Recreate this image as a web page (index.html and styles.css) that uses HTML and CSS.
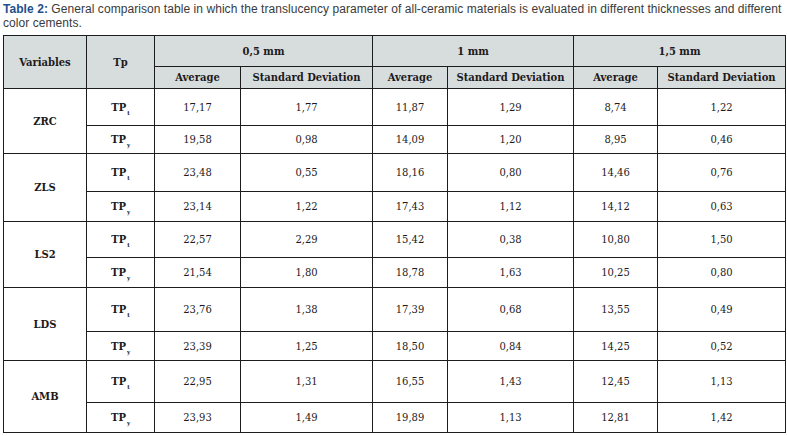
FILE: index.html
```html
<!DOCTYPE html>
<html lang="en">
<head>
<meta charset="utf-8">
<title>Table 2</title>
<link rel="stylesheet" href="styles.css">
</head>
<body>
<div class="page">
  <p class="caption"><strong class="label">Table 2:</strong> General comparison table in which the translucency parameter of all-ceramic materials is evaluated in different thicknesses and different color cements.</p>
  <table class="data">
    <colgroup>
      <col class="c-var"><col class="c-tp">
      <col class="c-avg1"><col class="c-sd1">
      <col class="c-avg2"><col class="c-sd2">
      <col class="c-avg3"><col class="c-sd3">
    </colgroup>
    <thead>
      <tr class="h1">
        <th rowspan="2">Variables</th>
        <th rowspan="2">Tp</th>
        <th colspan="2">0,5 mm</th>
        <th colspan="2">1 mm</th>
        <th colspan="2">1,5 mm</th>
      </tr>
      <tr class="h2">
        <th>Average</th><th>Standard Deviation</th>
        <th>Average</th><th>Standard Deviation</th>
        <th>Average</th><th>Standard Deviation</th>
      </tr>
    </thead>
    <tbody>
      <tr class="r-a1">
        <td rowspan="2" class="var">ZRC</td>
        <td class="tp">TP<sub>t</sub></td>
        <td>17,17</td><td>1,77</td><td>11,87</td><td>1,29</td><td>8,74</td><td>1,22</td>
      </tr>
      <tr class="r-a2">
        <td class="tp">TP<sub>y</sub></td>
        <td>19,58</td><td>0,98</td><td>14,09</td><td>1,20</td><td>8,95</td><td>0,46</td>
      </tr>
      <tr class="r-b1">
        <td rowspan="2" class="var">ZLS</td>
        <td class="tp">TP<sub>t</sub></td>
        <td>23,48</td><td>0,55</td><td>18,16</td><td>0,80</td><td>14,46</td><td>0,76</td>
      </tr>
      <tr class="r-b2">
        <td class="tp">TP<sub>y</sub></td>
        <td>23,14</td><td>1,22</td><td>17,43</td><td>1,12</td><td>14,12</td><td>0,63</td>
      </tr>
      <tr class="r-c1">
        <td rowspan="2" class="var">LS2</td>
        <td class="tp">TP<sub>t</sub></td>
        <td>22,57</td><td>2,29</td><td>15,42</td><td>0,38</td><td>10,80</td><td>1,50</td>
      </tr>
      <tr class="r-c2">
        <td class="tp">TP<sub>y</sub></td>
        <td>21,54</td><td>1,80</td><td>18,78</td><td>1,63</td><td>10,25</td><td>0,80</td>
      </tr>
      <tr class="r-d1">
        <td rowspan="2" class="var">LDS</td>
        <td class="tp">TP<sub>t</sub></td>
        <td>23,76</td><td>1,38</td><td>17,39</td><td>0,68</td><td>13,55</td><td>0,49</td>
      </tr>
      <tr class="r-d2">
        <td class="tp">TP<sub>y</sub></td>
        <td>23,39</td><td>1,25</td><td>18,50</td><td>0,84</td><td>14,25</td><td>0,52</td>
      </tr>
      <tr class="r-e1">
        <td rowspan="2" class="var">AMB</td>
        <td class="tp">TP<sub>t</sub></td>
        <td>22,95</td><td>1,31</td><td>16,55</td><td>1,43</td><td>12,45</td><td>1,13</td>
      </tr>
      <tr class="r-e2">
        <td class="tp">TP<sub>y</sub></td>
        <td>23,93</td><td>1,49</td><td>19,89</td><td>1,13</td><td>12,81</td><td>1,42</td>
      </tr>
    </tbody>
  </table>
</div>
</body>
</html>
```

FILE: styles.css
```css
html, body {
  margin: 0;
  padding: 0;
  background: #ffffff;
}

.page {
  padding: 0 3px;
}

.caption {
  margin: 0 -3px 0 0;
  padding-top: 2px;
  font-family: "Liberation Sans", Arial, sans-serif;
  font-size: 12px;
  letter-spacing: 0.06px;
  line-height: 14px;
  color: #3a3a3a;
  height: 33px;
}

.caption .label {
  color: #1f4f8c;
  font-weight: bold;
}

.data {
  border-collapse: collapse;
  table-layout: fixed;
  width: 782px;
  font-family: "DejaVu Serif Condensed", "DejaVu Serif", serif;
  font-stretch: condensed;
  font-size: 11.1px;
  color: #1e1a1b;
}

.c-var { width: 83px; }
.c-tp { width: 68px; }
.c-avg1 { width: 86px; }
.c-sd1 { width: 132px; }
.c-avg2 { width: 75px; }
.c-sd2 { width: 126px; }
.c-avg3 { width: 84px; }
.c-sd3 { width: 128px; }

.data th,
.data td {
  border: 1px solid #1c1c1c;
  padding: 0;
  text-align: center;
  vertical-align: middle;
}

.data th {
  background: #d7dddd;
  font-weight: bold;
}

.h1 { height: 31px; }
.h2 { height: 22px; }

.r-a1 { height: 37px; }
.r-a2 { height: 28px; }
.r-b1 { height: 38px; }
.r-b2 { height: 30px; }
.r-c1 { height: 36px; }
.r-c2 { height: 30px; }
.r-d1 { height: 44px; }
.r-d2 { height: 29px; }
.r-e1 { height: 42px; }
.r-e2 { height: 30px; }

.data td.var,
.data td.tp {
  font-weight: bold;
}

.tp sub {
  font-size: 6px;
  vertical-align: -4px;
  line-height: 0;
  margin-left: 1px;
}
```
